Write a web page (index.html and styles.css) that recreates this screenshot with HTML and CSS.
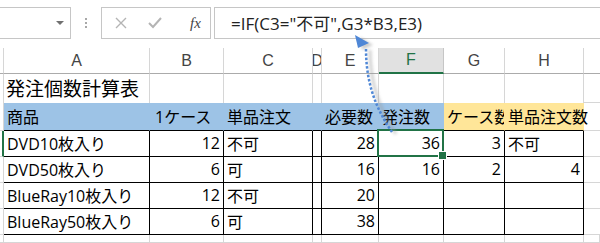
FILE: index.html
```html
<!DOCTYPE html>
<html lang="ja">
<head>
    <meta charset="UTF-8">
    <meta name="viewport" content="width=device-width, initial-scale=1.0">
    <title>発注個数計算表</title>
    <link rel="stylesheet" href="styles.css">
</head>
<body>
    <div class="app">
        <div class="fbar">
            <div class="namebox"><span class="dd"></span></div>
            <div class="grip"><i></i><i></i><i></i></div>
            <div class="fxbtns">
                <svg width="12" height="12" viewBox="0 0 12 12"><path d="M1 1 L11 11 M11 1 L1 11" stroke="#b4b4b4" stroke-width="1.4" fill="none"/></svg>
                <svg width="14" height="12" viewBox="0 0 14 12"><path d="M1 6 L5 10 L13 1" stroke="#b4b4b4" stroke-width="2" fill="none"/></svg>
                <span class="fx">fx</span>
            </div>
            <div class="formula">=IF(C3="不可",G3*B3,E3)</div>
        </div>

        <div class="sheet">
            <!-- column headers -->
            <div class="c hd corner"></div>
            <div class="c hd">A</div>
            <div class="c hd">B</div>
            <div class="c hd">C</div>
            <div class="c hd">D</div>
            <div class="c hd">E</div>
            <div class="c hd sel">F</div>
            <div class="c hd">G</div>
            <div class="c hd">H</div>
            <div class="c hd last"></div>

            <!-- row 1 -->
            <div class="c rh r1"></div>
            <div class="c r1 title">発注個数計算表</div>
            <div class="c r1"></div>
            <div class="c r1"></div>
            <div class="c r1"></div>
            <div class="c r1"></div>
            <div class="c r1"></div>
            <div class="c r1"></div>
            <div class="c r1"></div>
            <div class="c r1 gl"></div>

            <!-- row 2 -->
            <div class="c rh r2"></div>
            <div class="c r2 blue">商品</div>
            <div class="c r2 blue"><span class="ind">1ケース</span></div>
            <div class="c r2 blue">単品注文</div>
            <div class="c r2 blue"></div>
            <div class="c r2 blue">必要数</div>
            <div class="c r2 blue">発注数</div>
            <div class="c r2 yellow clip">ケース数</div>
            <div class="c r2 yellow spill">単品注文数</div>
            <div class="c r2 free"></div>

            <!-- row 3 -->
            <div class="c rh act"></div>
            <div class="c tb">DVD10枚入り</div>
            <div class="c tb num">12</div>
            <div class="c tb">不可</div>
            <div class="c tb"></div>
            <div class="c tb num">28</div>
            <div class="c tb num cur">36</div>
            <div class="c tb num">3</div>
            <div class="c tb">不可</div>
            <div class="c gl"></div>

            <!-- row 4 -->
            <div class="c rh"></div>
            <div class="c tb">DVD50枚入り</div>
            <div class="c tb num">6</div>
            <div class="c tb">可</div>
            <div class="c tb"></div>
            <div class="c tb num">16</div>
            <div class="c tb num">16</div>
            <div class="c tb num">2</div>
            <div class="c tb num">4</div>
            <div class="c gl"></div>

            <!-- row 5 -->
            <div class="c rh"></div>
            <div class="c tb">BlueRay10枚入り</div>
            <div class="c tb num">12</div>
            <div class="c tb">不可</div>
            <div class="c tb"></div>
            <div class="c tb num">20</div>
            <div class="c tb"></div>
            <div class="c tb"></div>
            <div class="c tb"></div>
            <div class="c gl"></div>

            <!-- row 6 -->
            <div class="c rh"></div>
            <div class="c tb">BlueRay50枚入り</div>
            <div class="c tb num">6</div>
            <div class="c tb">可</div>
            <div class="c tb"></div>
            <div class="c tb num">38</div>
            <div class="c tb"></div>
            <div class="c tb"></div>
            <div class="c tb"></div>
            <div class="c gl"></div>

            <!-- row 7 -->
            <div class="c rh"></div>
            <div class="c"></div>
            <div class="c"></div>
            <div class="c"></div>
            <div class="c"></div>
            <div class="c"></div>
            <div class="c"></div>
            <div class="c"></div>
            <div class="c"></div>
            <div class="c"></div>
        </div>

        <!-- trace arrow drawn over the sheet -->
        <svg class="trace" width="600" height="243" viewBox="0 0 600 243">
            <defs>
                <filter id="blur"><feGaussianBlur stdDeviation="1.5"/></filter>
            </defs>
            <path d="M370 50 C370 82, 378 108, 396 134" stroke="#9a9a9a" stroke-width="3" fill="none" opacity="0.45" filter="url(#blur)"/>
            <polygon points="360,37 373,45 362,50" fill="#9a9a9a" opacity="0.5" filter="url(#blur)"/>
            <path d="M366 49 C366 80, 374 106, 392 132" stroke="#4f87d6" stroke-width="2.5" stroke-dasharray="2.5 1.8" fill="none"/>
            <polygon points="355,35 369,43 358,48" fill="#4f87d6"/>
        </svg>
    </div>
</body>
</html>
```

FILE: styles.css
```css
* {
    box-sizing: border-box;
}

html, body {
    margin: 0;
    padding: 0;
    background: #fff;
}

.app {
    position: relative;
    width: 600px;
    height: 243px;
    overflow: hidden;
    font-family: "Open Sans", "Noto Sans CJK JP", sans-serif;
}

/* formula bar */
.fbar {
    display: flex;
    align-items: stretch;
    height: 48px;
    padding-top: 7px;
    padding-bottom: 9px;
}

.namebox {
    width: 72px;
    margin-left: -1px;
    border: 1px solid #c6c6c6;
    display: flex;
    align-items: center;
    justify-content: flex-end;
    padding-right: 6px;
}

.dd {
    width: 0;
    height: 0;
    border-left: 4px solid transparent;
    border-right: 4px solid transparent;
    border-top: 4px solid #707070;
}

.grip {
    width: 30px;
    display: flex;
    flex-direction: column;
    align-items: center;
    justify-content: center;
    gap: 2px;
}

.grip i {
    display: block;
    width: 2px;
    height: 2px;
    background: #a8a8a8;
}

.fxbtns {
    width: 110px;
    border: 1px solid #c6c6c6;
    display: flex;
    align-items: center;
    padding-left: 13px;
    gap: 21px;
}

.fx {
    font-family: "Liberation Serif", serif;
    font-style: italic;
    font-size: 15px;
    color: #444;
    margin-left: 7px;
}

.formula {
    flex: 1;
    margin-left: 3px;
    margin-right: -2px;
    border: 1px solid #c6c6c6;
    display: flex;
    align-items: center;
    padding-left: 16px;
    padding-bottom: 2px;
    font-size: 17px;
    color: #222;
    white-space: nowrap;
}

/* sheet grid */
.sheet {
    display: grid;
    grid-template-columns: 4px 146px 74px 89px 9px 57px 65px 61px 79px 1fr;
    grid-template-rows: 26px 29px 28px 26px 26px 26px 26px 1fr;
    height: 195px;
}

.c {
    border-right: 1px solid #d6d6d6;
    border-bottom: 1px solid #d6d6d6;
    font-size: 16px;
    color: #000;
    display: flex;
    align-items: center;
    padding: 0 3px 1px;
    white-space: nowrap;
    overflow: hidden;
}

.hd {
    justify-content: center;
    font-family: "Liberation Sans", sans-serif;
    font-size: 16px;
    color: #444;
    border-bottom-color: #ababab;
    padding: 0;
}

.hd.last {
    border-right: none;
}

.hd.sel {
    background: #e1e1e1;
    color: #217346;
    border-bottom: 2px solid #217346;
    border-right-color: #c6c6c6;
}

.rh {
    padding: 0;
}

.rh.act {
    border-right: 2px solid #217346;
}

.r1 {
    border-bottom: none;
}

.r1.gl {
    border-bottom: 1px solid #d6d6d6;
}

.title {
    font-size: 19px;
    padding-left: 2px;
}

.r2 {
    border-bottom-color: #000;
}

.r2.rh {
    border-bottom-color: #d6d6d6;
}

.blue {
    background: #9dc3e6;
    border-right-color: #9dc3e6;
}

.yellow {
    background: #ffe699;
    border-right-color: #ffe699;
}

.ind {
    padding-left: 2px;
}

.spill {
    overflow: visible;
    position: relative;
    z-index: 1;
    padding-left: 3px;
}

.free {
    border-bottom-color: #d6d6d6;
    border-right: none;
}

.tb {
    border-right-color: #000;
    border-bottom-color: #000;
}

.num {
    justify-content: flex-end;
    padding-right: 3px;
}

.cur {
    position: relative;
    overflow: visible;
}

.cur::after {
    content: "";
    position: absolute;
    top: -2px;
    left: -2px;
    right: -1px;
    bottom: -1px;
    border: 2px solid #217346;
}

.cur::before {
    content: "";
    position: absolute;
    right: -4px;
    bottom: -4px;
    width: 7px;
    height: 7px;
    background: #217346;
    border: 1px solid #fff;
    z-index: 2;
}

.gl {
    border-right: none;
}

.trace {
    position: absolute;
    left: 0;
    top: 0;
    pointer-events: none;
}
```
